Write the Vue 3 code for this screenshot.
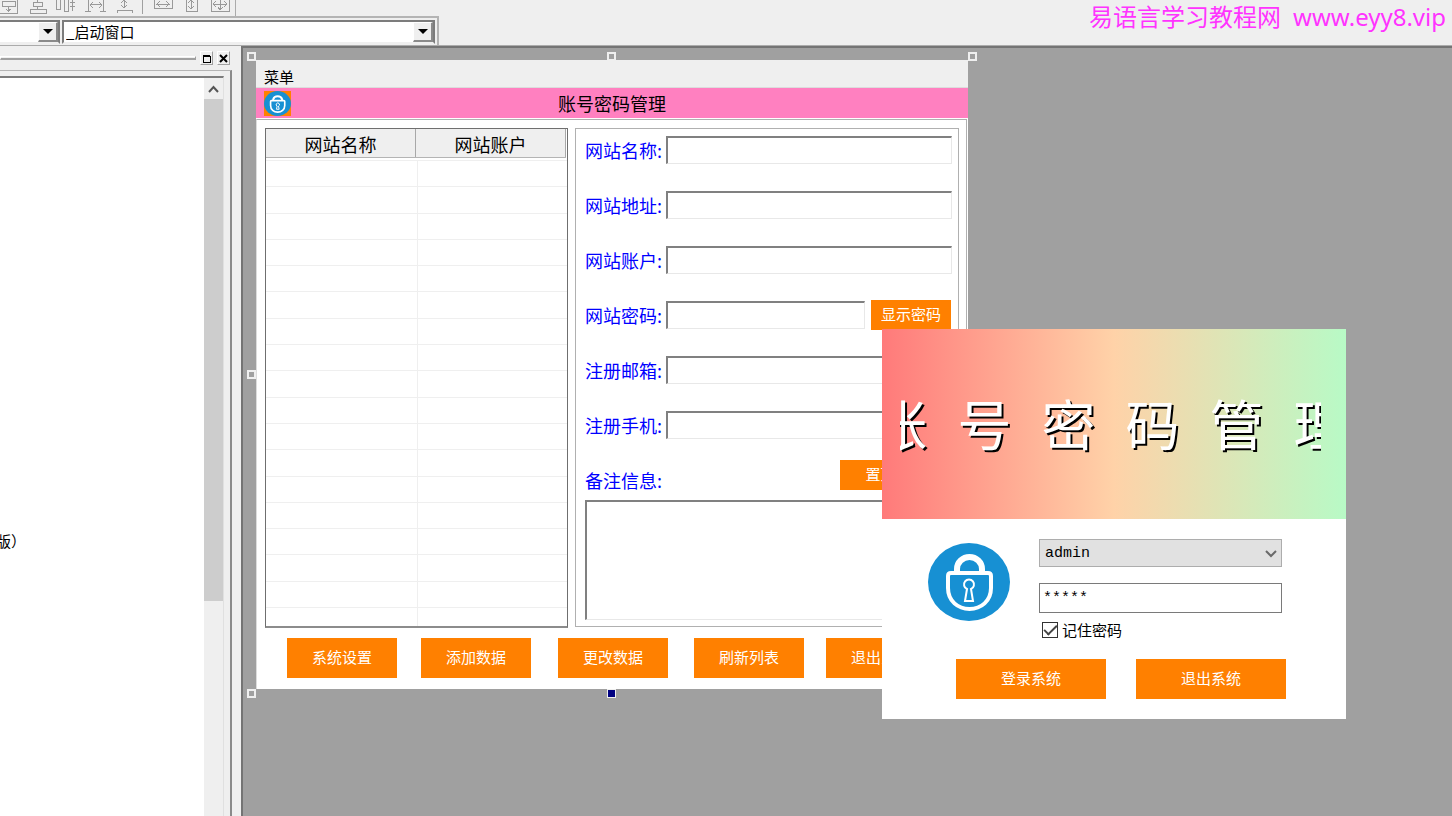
<script setup>
import { ref } from 'vue'

const tools = [
  'M8 1h13v5h-13z M14 6v6 M12 9l2 2l3 -2 M23 0v13h-17',
  'M10 2h9v4h-9z M14 0v2 M14 6v3 M7 9h16v4h-16z',
  'M4 0v9h4v-9 M12 0v11h4v-11 M20 0v11 M18 2h5 M18 6h5',
  'M7 0v11 M22 0v11 M4 11h6 M19 11h6 M9 4h12 M12 2l-3 3l3 3 M18 2l3 3l-3 3',
  'M14 0v8 M11 3l3 -3l3 3 M11 5l3 3l3 -3 M7 13v-3h15v3',
]
const sizes = [
  'M6 0v8h18v-8 M8 4h14 M12 1l-3 3l3 3 M18 1l3 3l-3 3',
  'M9 0v11h11v-11 M14 0v9 M11 3l3 -3l3 3 M11 6l3 3l3 -3',
  'M5 0v11h18v-11 M7 4h14 M14 0v10 M10 1l-3 3l3 3 M18 1l3 3l-3 3 M12 7l2 3l3 -3',
]
const handles = ['tl', 'tc', 'tr', 'ml', 'bl', 'bc']
const fields = [
  { id: 'name', label: '网站名称:' },
  { id: 'url', label: '网站地址:' },
  { id: 'account', label: '网站账户:' },
  { id: 'secret', label: '网站密码:', button: '显示密码' },
  { id: 'mail', label: '注册邮箱:' },
  { id: 'phone', label: '注册手机:' },
]
const actions = ['系统设置', '添加数据', '更改数据', '刷新列表', '退出系统']
const banner = [...'账号密码管理']
const user = ref('admin')
const password = ref('*****')
const remember = ref(true)
</script>

<template>
  <div class="ide">
    <header class="top">
      <div class="bands">
        <div class="tools">
          <button v-for="(d, i) in tools" :key="i" class="tool" :aria-label="'对齐' + (i + 1)">
            <svg viewBox="0 0 29 15"><path :d="d" /></svg>
          </button>
          <span class="sep"></span>
          <button v-for="(d, i) in sizes" :key="i" class="tool" :aria-label="'尺寸' + (i + 1)">
            <svg viewBox="0 0 29 15"><path :d="d" /></svg>
          </button>
        </div>
        <div class="combos">
          <div class="combo first">
            <select aria-label="对象"><option></option></select>
            <span class="drop"><svg viewBox="0 0 10 5"><path d="M0 0h10l-5 5z" /></svg></span>
          </div>
          <div class="combo second">
            <select aria-label="窗口"><option>_启动窗口</option></select>
            <span class="drop"><svg viewBox="0 0 10 5"><path d="M0 0h10l-5 5z" /></svg></span>
          </div>
        </div>
      </div>
      <div class="site"><span>易语言学习教程网</span><span>www.eyy8.vip</span></div>
    </header>

    <div class="work">
      <aside class="side">
        <div class="grip">
          <span class="line"></span>
          <button aria-label="还原"><svg viewBox="0 0 11 11"><path d="M2 3h7v6h-7z M2 2h7" /></svg></button>
          <button aria-label="关闭"><svg viewBox="0 0 11 11"><path d="M2 2l7 7 M9 2l-7 7" /></svg></button>
        </div>
        <div class="dock">
          <div class="tree"><span class="node">版）</span></div>
          <div class="scroll">
            <svg viewBox="0 0 19 21"><path d="M5 14l4.500 -5l4.500 5" /></svg>
            <div class="thumb"></div>
          </div>
        </div>
      </aside>

      <main class="canvas">
        <section class="form">
          <i v-for="h in handles" :key="h" class="handle" :class="h"></i>
          <nav class="menu"><button>菜单</button></nav>
          <div class="title">
            <span class="badge">
              <svg viewBox="0 0 82 78" preserveAspectRatio="none">
                <ellipse cx="41" cy="39" rx="41" ry="39" fill="#1790d3" />
                <g fill="none" stroke="#fff">
                  <path d="M28 30v-4a14 13 0 0 1 27 0v4" stroke-width="6" />
                  <path d="M20 33q0-3 3-3h37q3 0 3 3v12c0 13-10 21-21.500 21s-21.500-8-21.500-21z" stroke-width="5" />
                  <path d="M38 57l2-10a5 5 0 1 1 4 0l2 10z" stroke-width="3" />
                </g>
              </svg>
            </span>
            <h1>账号密码管理</h1>
          </div>
          <div class="body">
            <div class="columns">
              <table class="grid">
                <thead><tr><th>网站名称</th><th>网站账户</th></tr></thead>
                <tbody><tr v-for="n in 18" :key="n"><td></td><td></td></tr></tbody>
              </table>
              <div class="panel">
                <div v-for="f in fields" :key="f.id" class="field">
                  <label :for="f.id">{{ f.label }}</label>
                  <input :id="f.id" type="text" class="sunken" />
                  <button v-if="f.button" class="flat small">{{ f.button }}</button>
                </div>
                <div class="field note">
                  <label for="memo">备注信息:</label>
                  <button class="flat small wide">置顶窗口</button>
                </div>
                <textarea id="memo" class="sunken"></textarea>
              </div>
            </div>
            <div class="actions">
              <button v-for="a in actions" :key="a" class="flat">{{ a }}</button>
            </div>
          </div>
        </section>

        <section class="login">
          <div class="banner">
            <div class="marquee"><span v-for="c in banner" :key="c">{{ c }}</span></div>
          </div>
          <div class="entry">
            <svg class="logo" viewBox="0 0 82 78">
              <ellipse cx="41" cy="39" rx="41" ry="39" fill="#1790d3" />
              <g fill="none" stroke="#fff">
                <path d="M29 29v-3a12.500 12 0 0 1 25 0v3" stroke-width="6" />
                <path d="M20 33q0-3 3-3h37q3 0 3 3v12c0 13-10 21-21.500 21s-21.500-8-21.500-21z" stroke-width="4" />
                <path d="M37 58l2-12a5 5 0 1 1 4 0l2 12z" stroke-width="2" />
              </g>
            </svg>
            <div class="creds">
              <div class="pick">
                <select v-model="user" aria-label="账号"><option>admin</option></select>
                <svg viewBox="0 0 12 8"><path d="M1 1l5 5l5 -5" /></svg>
              </div>
              <input v-model="password" class="pass" type="text" aria-label="密码" />
              <label class="keep"><input v-model="remember" type="checkbox" />记住密码</label>
            </div>
          </div>
          <div class="go">
            <button class="flat">登录系统</button>
            <button class="flat">退出系统</button>
          </div>
        </section>
      </main>
    </div>
  </div>
</template>

<style>
body { margin: 0; overflow: hidden; }
</style>

<style scoped>
* { box-sizing: border-box; }
.ide {
  height: 100vh;
  display: flex;
  flex-direction: column;
  overflow: hidden;
  background: #efefef;
  color: #000;
  font-family: "Noto Sans CJK SC", sans-serif;
  font-size: 15px;
}
button, input, select, textarea {
  font: inherit;
  color: inherit;
  margin: 0;
  padding: 0;
  border: 0;
  border-radius: 0;
  background: none;
  outline: 0;
}
select { appearance: none; }
textarea { resize: none; }
svg { display: block; }

.top {
  flex: none;
  height: 46px;
  display: flex;
  justify-content: space-between;
  border-bottom: 1px solid #ababab;
}
.bands { width: 439px; }
.tools {
  width: 236px;
  height: 16px;
  display: flex;
  overflow: hidden;
  border-right: 1px solid #ababab;
}
.tool { flex: none; width: 29px; height: 15px; }
.tool:first-child { margin-left: -6px; }
.tool svg { width: 29px; height: 15px; fill: none; stroke: #999; shape-rendering: crispEdges; }
.sep { flex: none; width: 9px; height: 14px; border-left: 1px solid #a0a0a0; margin-left: 3px; margin-right: -3px; }
.combos {
  height: 29px;
  display: flex;
  gap: 2px;
  padding-top: 2px;
  border-top: 2px solid #b4b4b4;
  border-right: 2px solid #b4b4b4;
}
.combo {
  height: 24px;
  display: flex;
  align-items: stretch;
  background: #fff;
  border: 2px solid #7c7c7c;
  border-bottom-color: #efefef;
}
.first { width: 60px; border-left: 0; }
.second { width: 373px; }
.combo select { flex: 1; min-width: 0; padding-left: 2px; line-height: 20px; }
.drop {
  width: 20px;
  display: grid;
  place-items: center;
  background: #efefef;
  border: 1px solid #fff;
  border-right: 2px solid #8a8a8a;
  border-bottom: 2px solid #8a8a8a;
}
.drop svg { width: 10px; height: 5px; }
.site {
  display: flex;
  gap: 12px;
  padding-right: 6px;
  color: #ff33ff;
  font-family: "Noto Sans", "Noto Sans CJK SC", sans-serif;
  font-size: 24px;
  line-height: 34px;
  white-space: nowrap;
}

.work { flex: 1; min-height: 0; display: flex; }
.side { flex: none; width: 241px; display: flex; flex-direction: column; padding-right: 9px; }
.grip { height: 24px; display: flex; align-items: center; gap: 4px; padding-right: 2px; }
.line { flex: 1; height: 4px; border: 1px solid #fff; border-right-color: #a0a0a0; border-bottom: 2px solid #a0a0a0; }
.grip button {
  width: 13px;
  height: 14px;
  border: 1px solid #fff;
  border-right-color: #a0a0a0;
  border-bottom-color: #a0a0a0;
}
.grip svg { width: 11px; height: 11px; fill: none; stroke: #000; stroke-width: 2; }
.grip button:first-of-type svg { stroke-width: 1; shape-rendering: crispEdges; }
.dock {
  flex: 1;
  min-height: 0;
  display: flex;
  padding: 5px 6px 0 0;
  border-top: 1px solid #b4b4b4;
  border-right: 2px solid #8a8a8a;
}
.tree {
  flex: 1;
  display: flex;
  align-items: flex-start;
  background: #fff;
  border-top: 2px solid #7c7c7c;
  overflow: hidden;
}
.node { margin: 452px 0 0 -4px; line-height: 22px; }
.scroll { width: 20px; border-top: 2px solid #7c7c7c; border-right: 1px solid #e0e0e0; }
.scroll svg { width: 19px; height: 21px; fill: none; stroke: #555; stroke-width: 2; }
.thumb { height: 502px; background: #cdcdcd; }

.canvas {
  flex: 1;
  position: relative;
  overflow: hidden;
  background: #a0a0a0;
  border: 2px solid #747474;
  border-right: 0;
  border-bottom: 0;
}
.form { position: absolute; left: 13px; top: 12px; width: 712px; background: #fff; }
.handle { position: absolute; width: 9px; height: 9px; border: 2px solid #efefef; background: #a0a0a0; }
.tl, .tc, .tr { top: -8px; }
.tl, .ml, .bl { left: -9px; }
.tc, .bc { left: 351px; }
.tr { left: 712px; }
.ml { top: 310px; }
.bl, .bc { top: 629px; }
.bc { background: #000080; border-width: 1px; }
.menu {
  height: 28px;
  padding: 6px 8px 0;
  background: #efefef;
  border-bottom: 1px solid #dcdcdc;
}
.menu button { display: block; line-height: 22px; }
.title {
  height: 30px;
  display: grid;
  grid-template-columns: 27px 1fr 27px;
  align-items: center;
  padding: 0 8px;
  background: #ff80c0;
}
.badge { background: #ff8000; height: 25px; }
.badge svg { width: 27px; height: 25px; }
.title h1 { margin: 0; font-size: 18px; font-weight: 400; line-height: 30px; text-align: center; }
.body {
  margin: 1px 1px 0 0;
  padding: 8px 7px 11px 8px;
  border: 1px solid #b0b0b0;
  border-bottom: 0;
  border-left-color: #dcdcdc;
}
.columns { display: grid; grid-template-columns: 303px 1fr; gap: 7px; }
.grid {
  height: 500px;
  display: flex;
  flex-direction: column;
  border: 1px solid #6f6f6f;
  border-bottom: 2px solid #8c8c8c;
  font-size: 18px;
}
.grid thead tr { display: grid; grid-template-columns: 150px 150px; background: #efefef; border-bottom: 1px solid #b4b4b4; margin-right: 1px; }
.grid th { font-weight: 400; padding: 0; height: 28px; line-height: 30px; border-right: 1px solid #a8a8a8; }
.grid tbody {
  flex: 1;
  display: grid;
  grid-template-rows: repeat(17, 1fr) 18px;
  margin-top: 2px;
  border-top: 1px solid #efefef;
}
.grid tbody tr { display: grid; grid-template-columns: 152px 1fr; border-bottom: 1px solid #efefef; }
.grid tbody tr:last-child { border-bottom: 0; }
.grid td { padding: 0; }
.grid td:first-child { border-right: 1px solid #efefef; }
.panel {
  height: 499px;
  display: flex;
  flex-direction: column;
  padding: 6px 6px 6px 9px;
  border: 1px solid #b0b0b0;
}
.field { height: 30px; margin-bottom: 25px; display: flex; align-items: center; }
.field label { width: 81px; flex: none; font-size: 18px; line-height: 30px; color: #0000ff; }
.field input { flex: 1; min-width: 0; height: 28px; }
.sunken {
  background: #fff;
  border: 2px solid #808080;
  border-right-color: #e8e8e8;
  border-bottom-color: #e8e8e8;
  border-right-width: 1px;
  border-bottom-width: 1px;
  padding: 2px 4px;
}
.flat { height: 40px; padding-bottom: 3px; background: #ff8000; color: #fff; text-align: center; }
.small { flex: none; height: 30px; width: 80px; margin: 0 1px 0 6px; }
.wide { width: 111px; }
.field.note {
  height: 35px;
  margin: -5px 0 5px;
  align-items: flex-start;
  justify-content: space-between;
}
.note label { align-self: flex-end; }
textarea.sunken { flex: 1; display: block; width: 100%; }
.actions {
  display: grid;
  grid-template-columns: 134px 137px 136px 132px 110px;
  margin: 10px 0 0 22px;
}
.actions .flat { width: 110px; }

.login { position: absolute; left: 639px; top: 281px; width: 464px; height: 390px; background: #fff; }
.banner {
  height: 190px;
  padding: 50px 25px 50px 18px;
  background: linear-gradient(90deg, #ff7a7a, #ffd2a8 50%, #b8fac6);
}
.marquee {
  height: 90px;
  display: flex;
  justify-content: center;
  gap: 30px;
  overflow: hidden;
  color: #fff;
  font-size: 54px;
  line-height: 88px;
  text-shadow: 2px 2px 0 #000;
}
.marquee span { flex: none; }
.entry { display: flex; gap: 29px; padding: 20px 64px 0 46px; }
.logo { width: 82px; height: 78px; margin-top: 4px; }
.creds { flex: 1; }
.pick { position: relative; }
.pick select {
  display: block;
  width: 100%;
  height: 28px;
  padding: 0 5px;
  background: #e1e1e1;
  border: 1px solid #adadad;
  font-family: "Liberation Mono", monospace;
}
.pick svg { position: absolute; right: 5px; top: 11px; width: 12px; height: 8px; fill: none; stroke: #6a6a6a; stroke-width: 2; }
.pass {
  display: block;
  width: 100%;
  height: 30px;
  margin-top: 16px;
  padding: 0 3px;
  background: #fff;
  border: 1px solid #7a7a7a;
  font-family: "Liberation Mono", monospace;
}
.keep { display: flex; align-items: center; gap: 4px; margin: 5px 0 0 3px; line-height: 24px; }
.keep input {
  appearance: none;
  width: 16px;
  height: 16px;
  border: 1px solid #333;
  display: grid;
  place-items: center;
}
.keep input:checked::after {
  content: "";
  width: 11px;
  height: 5px;
  border: solid #444;
  border-width: 0 0 2px 2px;
  transform: translateY(-2px) rotate(-45deg);
}
.go { display: grid; grid-template-columns: 150px 150px; gap: 30px; padding: 17px 0 0 74px; }
</style>
